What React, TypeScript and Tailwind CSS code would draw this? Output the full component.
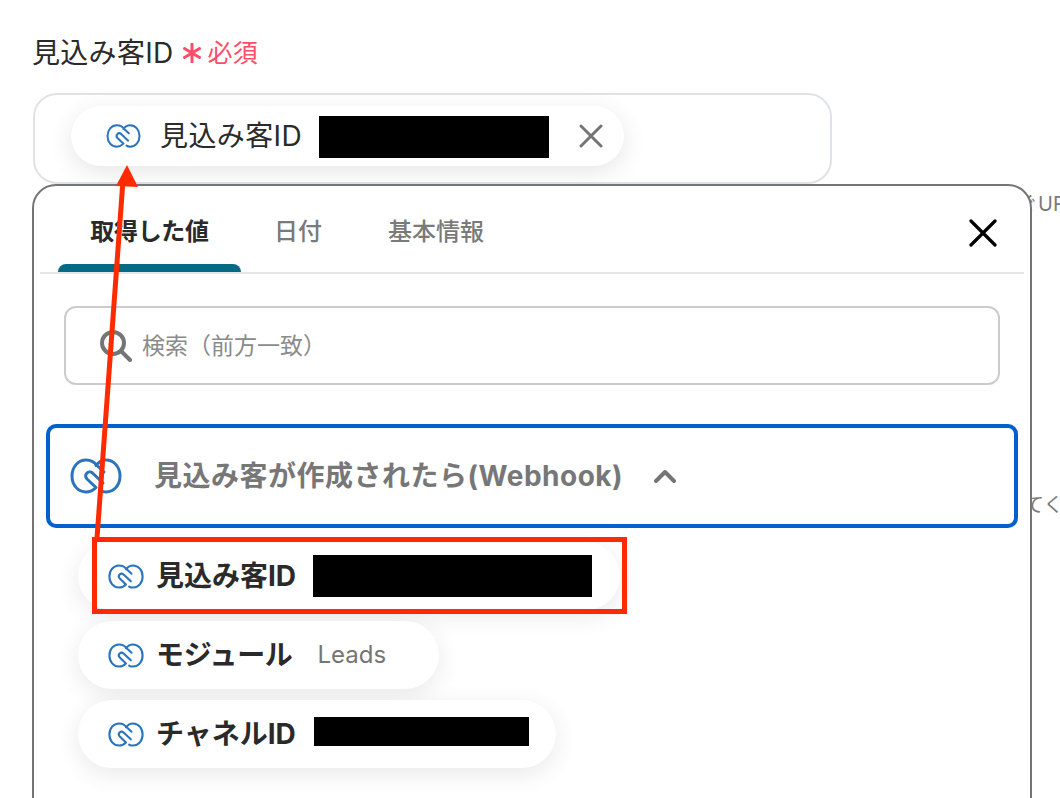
import { ReactNode } from "react";

const ZohoIcon = ({ className }: { className: string }) => {
  return (
    <svg viewBox="0 0 52 36" fill="none" stroke="#2a74bd" strokeWidth="3" strokeLinecap="round" strokeLinejoin="round" className={className}>
      <path d="M34 14L27 7.500C24 3.500 20 2 16 2C8 2 2 9 2 18C2 27 8 34 16 34C20 34 23 32.500 26 29.500L17 21C13 17 18.500 11.500 22.500 15L33 25" />
      <path d="M26 7.500C29 3.500 32 2 36 2C44 2 50 9 50 18C50 27 44 34 36 34C34 34 32 33.500 30.500 32.500" />
    </svg>
  );
};

const Pill = ({ className, children }: { className: string; children: ReactNode }) => {
  return (
    <div className={`flex h-[68px] items-center rounded-full bg-white pl-[30px] shadow-[0_6px_24px_rgba(0,0,0,0.09)] ${className}`}>
      <ZohoIcon className="h-[25px] w-[36px] shrink-0" />
      {children}
    </div>
  );
};

const App = () => {
  return (
    <div className="relative h-[798px] w-[1060px] overflow-hidden bg-white font-['Inter','Noto_Sans_CJK_JP',sans-serif] text-[#2a2a2a]">
      <p className="absolute left-[1018px] top-[189px] whitespace-nowrap text-[20px] text-[#7a7a7a]">ぐUR</p>
      <p className="absolute left-[1024px] top-[490px] whitespace-nowrap text-[20px] text-[#7a7a7a]">てく</p>

      <div className="flex flex-col px-[33px] pt-[34px]">
        <div className="-ml-px flex h-[38px] items-center text-[28px] leading-none tracking-[0.3px]">
          <span>見込み客ID</span>
          <svg viewBox="0 0 18 20" stroke="#ff4d67" strokeWidth="3" strokeLinecap="round" className="ml-[9px] h-[20px] w-[18px]">
            <path d="M9 1V19M1.500 5.500L16.500 14.500M16.500 5.500L1.500 14.500" />
          </svg>
          <span className="ml-[7px] text-[25px] text-[#ff4d67]">必須</span>
        </div>

        <div className="mt-[21px] flex h-[91px] w-[799px] items-start rounded-[24px] border-2 border-[#dfe3e8] pl-[36px] pt-[11px]">
          <div className="flex h-[60px] w-[553px] items-center rounded-full bg-white pl-[35px] shadow-[0_6px_24px_rgba(0,0,0,0.1)]">
            <ZohoIcon className="h-[24px] w-[35px] shrink-0" />
            <span className="ml-[19px] text-[28px] tracking-[0.4px]">見込み客ID</span>
            <div className="ml-[17px] mt-[2px] h-[42px] w-[230px] bg-black" />
            <svg viewBox="0 0 24 24" stroke="#757575" strokeWidth="3" strokeLinecap="round" className="ml-[30px] h-[24px] w-[24px]">
              <path d="M2 2L22 22M22 2L2 22" />
            </svg>
          </div>
        </div>

        <div className="relative -ml-px h-[640px] w-[1000px] rounded-[24px] border-2 border-[#757575] bg-white pl-[6px] pr-[6px]">
          <div className="flex h-[88px] items-stretch border-b-2 border-[#e6e6e6] pl-[18px]">
            <div className="relative flex w-[183px] justify-center pt-[28px]">
              <span className="text-[24px] font-bold leading-[36px] tracking-[-0.3px]">取得した値</span>
              <div className="absolute bottom-0 left-0 right-0 h-[8px] rounded-t-[8px] bg-[#066a85]" />
            </div>
            <span className="ml-[33px] pt-[28px] text-[24px] font-medium leading-[36px] text-[#7a7a7a]">日付</span>
            <span className="ml-[66px] pt-[28px] text-[24px] font-medium leading-[36px] text-[#7a7a7a]">基本情報</span>
            <svg viewBox="0 0 28 28" stroke="#000" strokeWidth="3.2" strokeLinecap="round" className="ml-[485px] mt-[33px] h-[28px] w-[28px]">
              <path d="M2 2L26 26M26 2L2 26" />
            </svg>
          </div>

          <div className="ml-[24px] mt-[32px] flex h-[79px] w-[936px] items-center rounded-[12px] border-2 border-[#cccccc] pl-[34px]">
            <svg viewBox="0 0 32 32" fill="none" stroke="#757575" strokeWidth="4" strokeLinecap="round" className="h-[32px] w-[32px]">
              <circle cx="13" cy="13" r="11" />
              <path d="M21 21L30 30" />
            </svg>
            <span className="ml-[10px] mt-[2px] text-[23px] text-[#8a8a8a]">検索（前方一致）</span>
          </div>

          <div className="ml-[6px] mt-[39px] flex h-[104px] w-[972px] items-center rounded-[10px] border-4 border-[#0060cc] pl-[20px]">
            <ZohoIcon className="h-[36px] w-[52px]" />
            <span className="ml-[32px] text-[28px] font-bold tracking-[0.5px] text-[#777777]">見込み客が作成されたら(Webhook)</span>
            <svg viewBox="0 0 24 14" fill="none" stroke="#757575" strokeWidth="4" strokeLinecap="round" strokeLinejoin="round" className="ml-[30px] h-[14px] w-[24px]">
              <path d="M3 12L12 3L21 12" />
            </svg>
          </div>

          <div className="ml-[38px] mt-[14px] flex flex-col items-start gap-[11px]">
            <Pill className="w-[542px]">
              <span className="ml-[12px] text-[28px] font-bold tracking-[0px]">見込み客ID</span>
              <div className="ml-[17px] h-[42px] w-[279px] bg-black" />
            </Pill>
            <Pill className="w-[361px]">
              <span className="ml-[12px] text-[28px] font-bold tracking-[-0.3px]">モジュール</span>
              <span className="ml-[25px] text-[24px] text-[#757575]">Leads</span>
            </Pill>
            <Pill className="w-[478px]">
              <span className="ml-[12px] text-[28px] font-bold tracking-[0px]">チャネルID</span>
              <div className="-mt-[6px] ml-[18px] h-[29px] w-[215px] bg-black" />
            </Pill>
          </div>
        </div>
      </div>

      {/* red annotation drawn over the screenshot */}
      <div className="absolute left-[92px] top-[537px] h-[77px] w-[535px] border-[5px] border-[#ff2a00]" />
      <svg viewBox="0 0 1060 798" className="pointer-events-none absolute left-0 top-0 h-[798px] w-[1060px]">
        <path d="M97 538L123 180" stroke="#ff2a00" strokeWidth="5" />
        <path d="M127 165L138 187L116 186Z" fill="#ff2a00" />
      </svg>
    </div>
  );
};

export default App;
